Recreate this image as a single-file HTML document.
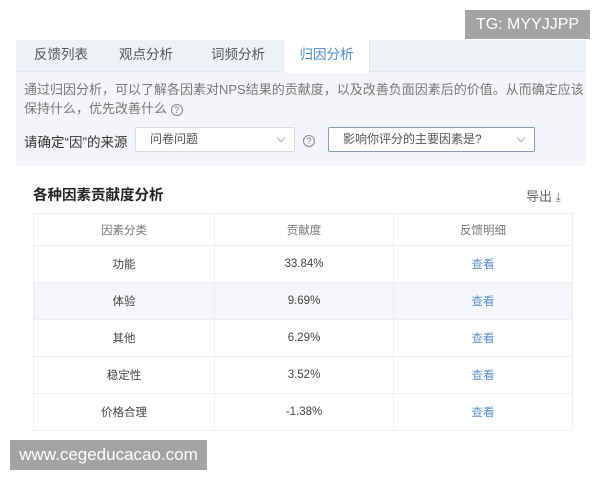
<!DOCTYPE html>
<html><head><meta charset="utf-8"><style>
*{margin:0;padding:0;box-sizing:border-box}
body{width:600px;height:480px;background:#fff;position:relative;overflow:hidden;font-family:"Liberation Sans","Noto Sans CJK SC",sans-serif;color:#333}
.abs{position:absolute}
.panel{left:16px;top:40px;width:570px;height:126px;background:#f3f5f8}
.tabs{left:16px;top:40px;width:570px;height:32px;background:#eef2f7;border-bottom:1px solid #e2e7ee}
.tab{position:absolute;top:0;height:32px;line-height:30px;font-size:13.5px;color:#555}
.sel{border:1px solid #d8dde5;background:#fff;border-radius:2px;height:25px;font-size:12px;line-height:23px;padding-left:14px;color:#555}
.chev{position:absolute;right:10px;top:7px;width:6px;height:6px;border-right:1px solid #aaa;border-bottom:1px solid #aaa;transform:rotate(45deg)}
.q{display:inline-block;width:12px;height:12px;border:1px solid #888;border-radius:50%;font-size:9px;line-height:10px;text-align:center;color:#777;vertical-align:middle}
table{position:absolute;left:33px;top:213px;width:539px;border-collapse:collapse;font-size:11.5px;color:#444;table-layout:fixed}
td{border:1px solid #eceef2;text-align:center;height:37px}
tr.h td{height:32px;color:#777}
tr.g td{background:#f4f6f9}
.l{color:#5b8fd0}
.wm{background:#a3a3a3;color:#fff;font-size:16px}
</style></head><body>
<div class="abs wm" style="left:465px;top:10px;width:125px;height:29px;line-height:29px;text-align:center">TG: MYYJJPP</div>
<div class="abs panel"></div>
<div class="abs tabs">
<div class="tab" style="left:18px">反馈列表</div>
<div class="tab" style="left:103px">观点分析</div>
<div class="tab" style="left:195px">词频分析</div>
<div class="tab" style="left:267px;width:87px;background:#fff;color:#4a8fd0;text-align:center;height:33px;border-left:1px solid #e2e7ee;border-right:1px solid #e2e7ee">归因分析</div>
</div>
<div class="abs" style="left:24px;top:80px;width:560px;font-size:13px;line-height:19px;color:#777">通过归因分析，可以了解各因素对NPS结果的贡献度，以及改善负面因素后的价值。从而确定应该保持什么，优先改善什么 <span class="q">?</span></div>
<div class="abs" style="left:24px;top:131px;font-size:13.5px;color:#333">请确定“因”的来源</div>
<div class="abs sel" style="left:135px;top:127px;width:160px">问卷问题<span class="chev"></span></div>
<div class="abs" style="left:303px;top:132px"><span class="q">?</span></div>
<div class="abs sel" style="left:328px;top:127px;width:207px;border-color:#8a9bb0">影响你评分的主要因素是?<span class="chev"></span></div>
<div class="abs" style="left:33px;top:184px;font-size:14.5px;font-weight:bold;color:#222">各种因素贡献度分析</div>
<div class="abs" style="left:526px;top:186px;font-size:13px;color:#666">导出 <span style="font-size:12px">⤓</span></div>
<table>
<colgroup><col style="width:181px"><col style="width:179px"><col style="width:179px"></colgroup>
<tr class="h"><td>因素分类</td><td>贡献度</td><td>反馈明细</td></tr>
<tr><td>功能</td><td>33.84%</td><td class="l">查看</td></tr>
<tr class="g"><td>体验</td><td>9.69%</td><td class="l">查看</td></tr>
<tr><td>其他</td><td>6.29%</td><td class="l">查看</td></tr>
<tr><td>稳定性</td><td>3.52%</td><td class="l">查看</td></tr>
<tr><td>价格合理</td><td>-1.38%</td><td class="l">查看</td></tr>
</table>
<div class="abs wm" style="left:10px;top:440px;width:197px;height:30px;line-height:30px;text-align:center;font-size:17px">www.cegeducacao.com</div>
</body></html>
